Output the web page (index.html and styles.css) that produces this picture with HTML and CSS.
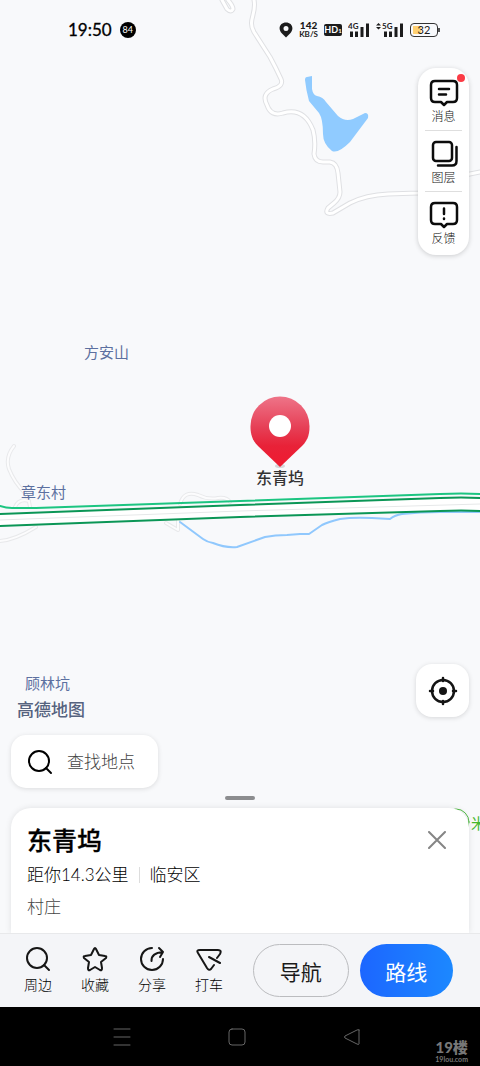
FILE: index.html
```html
<!DOCTYPE html>
<html lang="zh-CN">
    <head>
        <title>高德地图</title>
        <meta charset="utf-8" />
        <meta name="viewport" content="width=device-width,initial-scale=1">
        <link rel="stylesheet" href="styles.css">
    </head>
    <body>
        <div class="root">
            <main class="map">
                <svg class="map-canvas" viewBox="0 0 480 933" preserveAspectRatio="xMidYMin slice">
                    <defs>
                        <linearGradient id="pin" x1="0" y1="0" x2="0" y2="1">
                            <stop offset="0" stop-color="#ee7488" />
                            <stop offset=".45" stop-color="#e63e55" />
                            <stop offset=".7" stop-color="#e82238" />
                            <stop offset="1" stop-color="#f01a30" />
                        </linearGradient>
                        <g id="roads">
                            <path d="M222 0L227 9Q231 13 233 9Q233 6 228 0" />
                            <path d="M254 0C257 14 247 20 254 32L270 57Q276 68 281 79Q284 86 273 89Q261 94 267 105Q271 117 283 113Q304 107 313 130Q316 141 314 154Q315 162 323 162H330Q337 163 338 173L340 192Q340 198 334 203L328 208Q324 215 333 213L350 203Q366 195 388 194L418 193Q448 190 465 175L480 172" />
                        </g>
                        <g id="paths">
                            <path d="M14 446Q5 457 9 469Q14 482 25 493Q29 499 30 507M15 507Q19 498 29 501M0 541Q15 540 36 527" />
                            <path d="M180 504Q184 490 198 495Q208 500 218 498Q227 497 230 502M166 523L178 530V519" />
                        </g>
                    </defs>
                    <use href="#roads" class="road-edge" />
                    <use href="#roads" class="road" />
                    <use href="#paths" class="path-edge" />
                    <use href="#paths" class="path" />
                    <path fill="#90cbff" d="M305 80Q305 77 307 77L312 76V89Q313 95 317 96Q323 97 326 102L338 116Q345 122 353 119L365 113Q369 113 368 118L350 142Q338 154 332 151Q323 144 323 134Q323 119 319 113L309 101Q306 90 305 80Z" />
                    <path class="river" d="M180 522L203 539Q207 542 213 543Q225 548 237 547L265 537Q275 535 287 535L300 534H309L322 525Q328 522 340 519Q353 517 372 518L390 519Q395 515 402 514Q420 512 440 512H480" />
                    <path fill="#fff" d="M0 513L240 505L453 498L480 498V511L453 510L240 517L0 526Z" />
                    <path class="lane" d="M0 520L240 511L480 504" />
                    <path class="highway light" d="M0 506Q6 508 12 508H36L240 501L440 494Q462 493 480 494" />
                    <path class="highway" d="M0 514L240 505L440 498Q462 497 480 498" />
                    <path class="highway" d="M0 526L240 517L440 511Q462 510 480 511" />
                    <ellipse cx="280" cy="466" rx="5" ry="2" fill="#d6d7da" />
                    <path fill="url(#pin)" d="M280 467L258 446C251 439 250.500 432 250.500 426A29.500 29.500 0 0 1 309.500 426C309.500 432 309 439 302 446Z" />
                    <circle cx="280" cy="426" r="11" fill="#fff" />
                    <circle cx="456" cy="822" r="13" fill="none" stroke="#55bd48" />
                    <text class="place" x="84" y="358">方安山</text>
                    <text class="place" x="21" y="498">章东村</text>
                    <text class="place" x="25" y="689">顾林坑</text>
                    <text class="place green" x="471" y="829">米</text>
                    <text class="target" x="280" y="484">东青坞</text>
                </svg>

                <header class="status">
                    <span class="time">19:50</span>
                    <span class="badge">84</span>
                    <span class="status-right">
                        <svg width="14" height="16" viewBox="0 0 14 16">
                            <path fill="#1c1c1c" fill-rule="evenodd" d="M7 15.500L3 11.500C-2 6 1.500 .5 7 .5S16 6 11 11.500ZM7 4A2.500 2.500 0 1 0 7 9A2.500 2.500 0 1 0 7 4Z" />
                        </svg>
                        <span class="speed"><b>142</b>KB/S</span>
                        <span class="hd">HD<small>1</small></span>
                        <svg class="signal" width="22" height="16" viewBox="0 0 22 16">
                            <text x="0" y="7">4G</text>
                            <path d="M3.500 9.500V15M8.500 9.500V15M14 5V15M19.500 1.500V15" />
                        </svg>
                        <svg class="signal" width="28" height="16" viewBox="0 0 28 16">
                            <path class="arrows" d="M0 3.500L2.500 1L5 3.500ZM0 5L2.500 7.500L5 5Z" />
                            <text x="6" y="7">5G</text>
                            <path d="M9.500 9.500V15M14.500 9.500V15M20 5V15M25.500 1.500V15" />
                        </svg>
                        <span class="battery">32</span>
                    </span>
                </header>

                <nav class="tools">
                    <button>
                        <svg width="30" height="28" viewBox="0 0 30 28">
                            <path d="M6 2H24Q28 2 28 6V19Q28 23 24 23H18L15 26L12 23H6Q2 23 2 19V6Q2 2 6 2ZM10 10H20M10 15.500H17" />
                        </svg>
                        消息
                        <i class="dot"></i>
                    </button>
                    <button>
                        <svg width="30" height="28" viewBox="0 0 30 28">
                            <rect x="4" y="2" width="19" height="19" rx="3" />
                            <path d="M27.500 7V21Q27.500 25.500 23 25.500H9" />
                        </svg>
                        图层
                    </button>
                    <button>
                        <svg width="30" height="28" viewBox="0 0 30 28">
                            <path d="M6 2H24Q28 2 28 6V19Q28 23 24 23H18L15 26L12 23H6Q2 23 2 19V6Q2 2 6 2ZM15 7.500V13M15 17.500V18" />
                        </svg>
                        反馈
                    </button>
                </nav>

                <button class="locate" aria-label="定位">
                    <svg width="30" height="30" viewBox="0 0 30 30">
                        <circle cx="15" cy="15" r="11" />
                        <circle class="solid" cx="15" cy="15" r="4" />
                        <path d="M15 2V5M15 25V28M2 15H5M25 15H28" />
                    </svg>
                </button>
                <div class="logo">高德地图</div>
                <label class="search">
                    <svg width="26" height="26" viewBox="0 0 26 26">
                        <circle cx="12" cy="12" r="10" />
                        <path d="M19 19L24 24" />
                    </svg>
                    <input type="text" placeholder="查找地点" aria-label="查找地点" />
                </label>
                <div class="handle"></div>

                <section class="card">
                    <div class="card-head">
                        <h1>东青坞</h1>
                        <button class="close" aria-label="关闭">
                            <svg width="18" height="18" viewBox="0 0 18 18">
                                <path d="M1 1L17 17M17 1L1 17" />
                            </svg>
                        </button>
                    </div>
                    <p class="distance"><span>距你14.3公里</span><span class="district">临安区</span></p>
                    <p class="type">村庄</p>
                </section>
            </main>

            <footer class="actions">
                <button class="item">
                    <svg width="26" height="26" viewBox="0 0 26 26">
                        <circle cx="12" cy="12" r="10" />
                        <path d="M19 19L24 24" />
                    </svg>
                    周边
                </button>
                <button class="item">
                    <svg width="26" height="26" viewBox="0 0 26 26">
                        <path d="M12 3Q13 1 14 3L17 9L23 10Q25 10 24 12L19 16L20 22Q20 25 18 24L13 21L8 24Q6 25 6 22L7 16L2 12Q1 10 3 10L9 9Z" />
                    </svg>
                    收藏
                </button>
                <button class="item">
                    <svg width="26" height="26" viewBox="0 0 26 26">
                        <path d="M13 2A11 11 0 1 0 24 13M12.500 15Q12 7 24 6M20 2L24 6L21 11" />
                    </svg>
                    分享
                </button>
                <button class="item">
                    <svg width="26" height="26" viewBox="0 0 26 26">
                        <path d="M18 19L15 23Q13 25 11 22L2 7Q0 4 4 4H22Q26 4 24 8L21 12M13 11L24 17" />
                    </svg>
                    打车
                </button>
                <button class="btn">导航</button>
                <button class="btn primary">路线</button>
            </footer>

            <div class="sysnav">
                <button aria-label="菜单">
                    <svg width="18" height="18" viewBox="0 0 18 18"><path d="M1 1H17M1 9H17M1 17H17" /></svg>
                </button>
                <button aria-label="主页">
                    <svg width="18" height="18" viewBox="0 0 18 18"><rect x="1" y="1" width="16" height="16" rx="3" /></svg>
                </button>
                <button aria-label="返回">
                    <svg width="18" height="18" viewBox="0 0 18 18"><path d="M16 2V16Q16 17 14 16L2 10Q1 9 2 8L14 2Q16 1 16 2Z" /></svg>
                </button>
                <div class="watermark"><b>19楼</b>19lou.com</div>
            </div>
        </div>
    </body>
</html>
```

FILE: styles.css
```css
* {
    padding: 0;
    margin: 0;
    box-sizing: border-box;
}
body {
    font-family: "Lato", "Noto Sans CJK SC", sans-serif;
    font-size: 14px;
    color: #1a1a1a;
    background-color: #000;
}
button,
input {
    font: inherit;
    color: inherit;
    border: 0;
    background: none;
}
button {
    cursor: pointer;
}
svg {
    display: block;
    flex: none;
    fill: none;
    stroke-linecap: round;
    stroke-linejoin: round;
}

.root {
    display: flex;
    flex-direction: column;
    min-height: 100vh;
}

/* 地图 */
.map {
    position: relative;
    flex: 1;
    display: flex;
    flex-direction: column;
    overflow: hidden;
    background-color: #f8f9fb;
}
.map > * {
    position: relative;
}
.map .map-canvas {
    position: absolute;
    top: 0;
    left: 0;
    width: 100%;
    height: 100%;
}
.road-edge {
    stroke: #dfe0e3;
    stroke-width: 5;
}
.road {
    stroke: #fff;
    stroke-width: 3;
}
.path-edge {
    stroke: #e8e9eb;
    stroke-width: 4;
}
.path {
    stroke: #fcfcfd;
    stroke-width: 2;
}
.lane {
    stroke: #e6e8e9;
}
.river {
    stroke: #90c8fd;
    stroke-width: 2;
}
.highway {
    stroke: #0b9656;
    stroke-width: 2;
}
.highway.light {
    stroke: #1cc581;
}
.place {
    font-size: 15px;
    fill: #5c70a0;
}
.place.green {
    fill: #45b82f;
}
.target {
    font-size: 16px;
    font-weight: 500;
    text-anchor: middle;
    fill: #333;
}

/* 状态栏 */
.status {
    display: flex;
    align-items: center;
    height: 60px;
    padding: 0 40px 0 68px;
}
.time {
    font-size: 17px;
    line-height: 20px;
    color: #000;
    -webkit-text-stroke: 0.3px #000;
}
.badge {
    width: 16px;
    height: 16px;
    margin-left: 8px;
    border-radius: 50%;
    font-size: 9px;
    line-height: 16px;
    text-align: center;
    color: #fff;
    background-color: #000;
}
.status-right {
    display: flex;
    align-items: center;
    gap: 6px;
    margin-left: auto;
}
.speed {
    font-size: 8px;
    font-weight: 700;
    line-height: 9px;
    text-align: center;
}
.speed b {
    display: block;
    font-size: 10px;
}
.hd {
    width: 18px;
    height: 12px;
    border-radius: 2px;
    font-size: 9px;
    font-weight: 700;
    line-height: 12px;
    text-align: center;
    color: #fff;
    background-color: #1c1c1c;
}
.hd small {
    font-size: 6px;
}
.signal {
    stroke: #1c1c1c;
    stroke-width: 3;
    stroke-linecap: butt;
}
.signal text {
    font-size: 8px;
    font-weight: 700;
    fill: #1c1c1c;
    stroke: none;
}
.signal .arrows {
    fill: #1c1c1c;
    stroke: none;
}
.battery {
    position: relative;
    width: 28px;
    height: 14px;
    margin-right: 2px;
    border: 1px solid #333;
    border-radius: 4px;
    font-size: 11px;
    line-height: 12px;
    text-align: center;
    background: linear-gradient(90deg, #ffd071 8px, transparent 8px) 2px 2px / 22px 8px no-repeat;
}
.battery::after {
    content: "";
    position: absolute;
    top: 4px;
    right: -3px;
    width: 2px;
    height: 4px;
    background-color: #555;
}

/* 右侧工具 */
.tools {
    align-self: flex-end;
    width: 51px;
    margin: 8px 11px 0 0;
    padding: 2px 0;
    border-radius: 18px;
    background-color: #fff;
    box-shadow: 0 1px 5px rgba(0, 0, 0, 0.18);
}
.tools button {
    position: relative;
    display: flex;
    flex-direction: column;
    align-items: center;
    width: 37px;
    height: 61px;
    margin: 0 auto;
    padding-top: 9px;
    font-size: 12px;
    font-weight: 300;
    line-height: 20px;
    color: #111;
}
.tools button:not(:last-child) {
    border-bottom: 1px solid #dedede;
}
.tools svg {
    stroke: #0c0c0c;
    stroke-width: 2.5;
}
.dot {
    position: absolute;
    top: 4px;
    right: -3px;
    width: 8px;
    height: 8px;
    border-radius: 50%;
    background-color: #fb3b45;
}

.locate {
    display: flex;
    align-items: center;
    justify-content: center;
    align-self: flex-end;
    width: 53px;
    height: 53px;
    margin: auto 11px 0 0;
    border-radius: 16px;
    background-color: #fff;
    box-shadow: 0 1px 5px rgba(0, 0, 0, 0.14);
}
.locate svg {
    stroke: #141414;
    stroke-width: 2.5;
}
.locate .solid {
    fill: #141414;
    stroke: none;
}
.logo {
    margin: -17px 0 0 17px;
    font-size: 17px;
    font-weight: 500;
    line-height: 20px;
    color: #56637f;
    text-shadow: 0 0 2px #fff;
}
.search {
    display: flex;
    align-items: center;
    gap: 14px;
    width: 147px;
    height: 53px;
    margin: 15px 0 0 11px;
    padding: 0 10px 0 16px;
    border-radius: 15px;
    background-color: #fff;
    box-shadow: 0 1px 5px rgba(0, 0, 0, 0.12);
}
.search svg {
    stroke: #000;
    stroke-width: 2;
}
.search input {
    width: 100%;
    min-width: 0;
    font-size: 17px;
    font-weight: 300;
    outline: none;
}
.search input::placeholder {
    color: #444;
}
.handle {
    width: 30px;
    height: 4px;
    margin: 8px auto;
    border-radius: 2px;
    background-color: #8c8d8f;
}

/* 地点卡片 */
.card {
    margin: 0 11px;
    padding: 14px 16px 11px;
    border-radius: 20px 20px 0 0;
    background-color: #fff;
    box-shadow: 0 0 6px rgba(0, 0, 0, 0.1);
}
.card-head {
    display: flex;
    align-items: center;
    justify-content: space-between;
    padding-right: 7px;
}
.card h1 {
    font-size: 25px;
    font-weight: 500;
    line-height: 36px;
    color: #000;
    -webkit-text-stroke: 0.3px #000;
}
.close svg {
    stroke: #858585;
    stroke-width: 2;
}
.card p {
    font-size: 17px;
    font-weight: 300;
    line-height: 32px;
    color: #000;
}
.card .distance {
    display: flex;
    align-items: center;
    margin-top: 1px;
}
.district {
    margin-left: 10px;
    padding-left: 10px;
    line-height: 16px;
    border-left: 1px solid #ddd;
}
.card .type {
    line-height: 31px;
    color: #444;
}

/* 底部操作 */
.actions {
    position: relative;
    display: flex;
    align-items: center;
    gap: 11px;
    height: 74px;
    padding: 0 27px 0 15px;
    border-top: 1px solid #e8e9eb;
    background-color: #f4f5f8;
}
.item {
    display: flex;
    flex-direction: column;
    align-items: center;
    width: 46px;
    font-size: 14px;
    font-weight: 300;
    line-height: 20px;
    color: #000;
}
.item svg {
    margin-bottom: 3px;
    stroke: #161616;
    stroke-width: 2;
}
.btn {
    flex: 1;
    height: 53px;
    border: 1px solid #bbbcbf;
    border-radius: 27px;
    font-size: 21px;
}
.item + .btn {
    margin-left: 10px;
}
.btn.primary {
    border: 0;
    color: #fff;
    background: linear-gradient(90deg, #1c66ff, #1c88ff);
}

/* 系统导航 */
.sysnav {
    position: relative;
    display: flex;
    align-items: center;
    justify-content: center;
    gap: 97px;
    height: 59px;
    padding-right: 7px;
    background-color: #000;
}
.sysnav svg {
    stroke: #666;
    stroke-width: 1;
}
.watermark {
    position: absolute;
    right: 12px;
    bottom: 3px;
    font-size: 7px;
    font-weight: 700;
    line-height: 8px;
    text-align: center;
    color: #777;
}
.watermark b {
    display: block;
    font-size: 15px;
    line-height: 15px;
}
```
